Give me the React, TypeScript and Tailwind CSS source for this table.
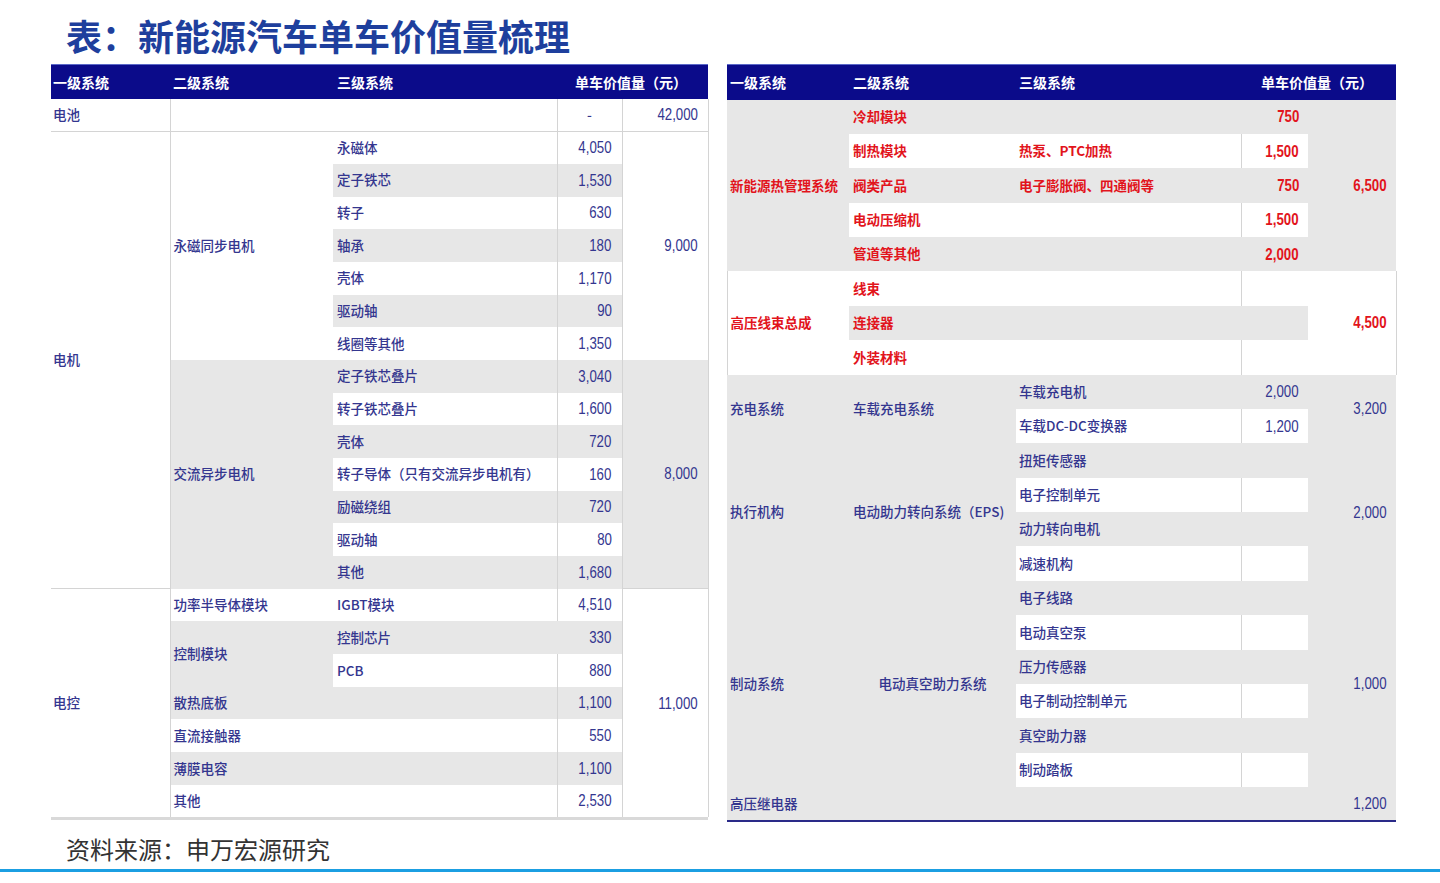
import React from "react";

const G = "bg-[#e7e7e7]";
const W = "bg-white";
const BLUE = "text-[#34368f]";
const RED = "text-[#e2141c] font-bold";
const LINE = "border-[#d4d4d4]";

function N({ v }: { v: string }) {
  return (
    <span className="inline-block origin-right scale-x-[0.78] font-['Liberation_Sans',sans-serif] text-[17px] leading-none">
      {v}
    </span>
  );
}

const motorPm: [string, string, string][] = [
  ["永磁体", "4,050", W],
  ["定子铁芯", "1,530", G],
  ["转子", "630", W],
  ["轴承", "180", G],
  ["壳体", "1,170", W],
  ["驱动轴", "90", G],
  ["线圈等其他", "1,350", W],
];

const motorAc: [string, string, string][] = [
  ["定子铁芯叠片", "3,040", G],
  ["转子铁芯叠片", "1,600", W],
  ["壳体", "720", G],
  ["转子导体（只有交流异步电机有）", "160", W],
  ["励磁绕组", "720", G],
  ["驱动轴", "80", W],
  ["其他", "1,680", G],
];

function LeftTable() {
  const r = "h-[32.68px]";
  return (
    <table className={`w-[657px] table-fixed border-collapse ${BLUE} text-[13.5px] font-medium leading-none`}>
      <colgroup>
        <col className="w-[119px]" />
        <col className="w-[163px]" />
        <col className="w-[224px]" />
        <col className="w-[65px]" />
        <col className="w-[86px]" />
      </colgroup>
      <thead>
        <tr className="h-[34px] bg-[#0b0b8a] text-white text-[14px] border-t border-[#5b68c8]">
          <th className="pl-[2px] text-left font-bold">一级系统</th>
          <th className="pl-[3px] text-left font-bold">二级系统</th>
          <th className="pl-[4px] text-left font-bold">三级系统</th>
          <th colSpan={2} className="pl-[18px] text-left font-bold">单车价值量（元）</th>
        </tr>
      </thead>
      <tbody>
        <tr className={`${r} border-b ${LINE}`}>
          <td className="pl-[2px] bg-white">电池</td>
          <td colSpan={2} className={`bg-white border-l ${LINE}`}></td>
          <td className={`bg-white border-l ${LINE} text-center`}>-</td>
          <td className={`bg-white border-l border-r ${LINE} text-right pr-[10px]`}>
            <N v="42,000" />
          </td>
        </tr>
        {motorPm.map(([name, v, bg], i) => (
          <tr key={"pm" + i} className={r}>
            {i === 0 && (
              <td rowSpan={14} className="pl-[2px] bg-white">
                电机
              </td>
            )}
            {i === 0 && (
              <td rowSpan={7} className={`pl-[3px] bg-white border-l ${LINE}`}>
                永磁同步电机
              </td>
            )}
            <td className={`pl-[4px] ${bg}`}>{name}</td>
            <td className={`${bg} border-l ${LINE} text-right pr-[10px]`}>
              <N v={v} />
            </td>
            {i === 0 && (
              <td rowSpan={7} className={`bg-white border-l border-r ${LINE} text-right pr-[10px]`}>
                <N v="9,000" />
              </td>
            )}
          </tr>
        ))}
        {motorAc.map(([name, v, bg], i) => (
          <tr key={"ac" + i} className={r}>
            {i === 0 && (
              <td rowSpan={7} className={`pl-[3px] ${G} border-l ${LINE}`}>
                交流异步电机
              </td>
            )}
            <td className={`pl-[4px] ${bg}`}>{name}</td>
            <td className={`${bg} border-l ${LINE} text-right pr-[10px]`}>
              <N v={v} />
            </td>
            {i === 0 && (
              <td rowSpan={7} className={`${G} border-l border-r ${LINE} text-right pr-[10px]`}>
                <N v="8,000" />
              </td>
            )}
          </tr>
        ))}
        <tr className={r}>
          <td rowSpan={7} className={`pl-[2px] bg-white border-t ${LINE}`}>
            电控
          </td>
          <td className={`pl-[3px] bg-white border-l ${LINE}`}>功率半导体模块</td>
          <td className="pl-[4px] bg-white">IGBT模块</td>
          <td className={`bg-white border-l ${LINE} text-right pr-[10px]`}>
            <N v="4,510" />
          </td>
          <td rowSpan={7} className={`bg-white border-l border-r border-t ${LINE} text-right pr-[10px]`}>
            <N v="11,000" />
          </td>
        </tr>
        <tr className={r}>
          <td rowSpan={2} className={`pl-[3px] ${G} border-l ${LINE}`}>
            控制模块
          </td>
          <td className={`pl-[4px] ${G}`}>控制芯片</td>
          <td className={`${G} text-right pr-[10px]`}>
            <N v="330" />
          </td>
        </tr>
        <tr className={r}>
          <td className="pl-[4px] bg-white">PCB</td>
          <td className={`bg-white border-l ${LINE} text-right pr-[10px]`}>
            <N v="880" />
          </td>
        </tr>
        {(
          [
            ["散热底板", "1,100", G],
            ["直流接触器", "550", W],
            ["薄膜电容", "1,100", G],
            ["其他", "2,530", W],
          ] as [string, string, string][]
        ).map(([name, v, bg], i) => (
          <tr key={"ec" + i} className={r}>
            <td colSpan={2} className={`pl-[3px] ${bg} border-l ${LINE}`}>
              {name}
            </td>
            <td className={`${bg} border-l ${LINE} text-right pr-[10px]`}>
              <N v={v} />
            </td>
          </tr>
        ))}
        <tr className="h-[3px]">
          <td colSpan={5} className="bg-[#d9d9d9]"></td>
        </tr>
      </tbody>
    </table>
  );
}

const thermal: [string, string, string, string][] = [
  ["冷却模块", "", "750", G],
  ["制热模块", "热泵、PTC加热", "1,500", W],
  ["阀类产品", "电子膨胀阀、四通阀等", "750", G],
  ["电动压缩机", "", "1,500", W],
  ["管道等其他", "", "2,000", G],
];

const eps: [string, string][] = [
  ["扭矩传感器", G],
  ["电子控制单元", W],
  ["动力转向电机", G],
  ["减速机构", W],
];

const brake: [string, string][] = [
  ["电子线路", G],
  ["电动真空泵", W],
  ["压力传感器", G],
  ["电子制动控制单元", W],
  ["真空助力器", G],
  ["制动踏板", W],
];

function RightTable() {
  const r = "h-[34.38px]";
  return (
    <table className={`w-[669px] table-fixed border-collapse ${BLUE} text-[13.5px] font-medium leading-none`}>
      <colgroup>
        <col className="w-[122px]" />
        <col className="w-[167px]" />
        <col className="w-[225px]" />
        <col className="w-[67px]" />
        <col className="w-[88px]" />
      </colgroup>
      <thead>
        <tr className="h-[35px] bg-[#0b0b8a] text-white text-[14px] border-t border-[#5b68c8]">
          <th className="pl-[3px] text-left font-bold">一级系统</th>
          <th className="pl-[4px] text-left font-bold">二级系统</th>
          <th className="pl-[3px] text-left font-bold">三级系统</th>
          <th colSpan={2} className="pl-[20px] text-left font-bold">单车价值量（元）</th>
        </tr>
      </thead>
      <tbody>
        {thermal.map(([a, b, v, bg], i) => (
          <tr key={"th" + i} className={`${r} ${RED}`}>
            {i === 0 && (
              <td rowSpan={5} className={`pl-[3px] ${G} whitespace-nowrap`}>
                新能源热管理系统
              </td>
            )}
            <td className={`pl-[4px] ${bg}`}>{a}</td>
            <td className={`pl-[3px] ${bg}`}>{b}</td>
            <td className={`${bg} ${bg === W ? "border-l " + LINE : ""} text-right pr-[9px]`}>
              <N v={v} />
            </td>
            {i === 0 && (
              <td rowSpan={5} className={`${G} text-right pr-[9px]`}>
                <N v="6,500" />
              </td>
            )}
          </tr>
        ))}
        {(
          [
            ["线束", W],
            ["连接器", G],
            ["外装材料", W],
          ] as [string, string][]
        ).map(([a, bg], i) => (
          <tr key={"hv" + i} className={`${r} ${RED}`}>
            {i === 0 && (
              <td rowSpan={3} className={`pl-[3px] bg-white border-l ${LINE}`}>
                高压线束总成
              </td>
            )}
            <td className={`pl-[4px] ${bg}`}>{a}</td>
            <td className={`${bg}`}></td>
            <td className={`${bg} ${bg === W ? "border-l " + LINE : ""}`}></td>
            {i === 0 && (
              <td rowSpan={3} className={`bg-white border-r ${LINE} text-right pr-[9px]`}>
                <N v="4,500" />
              </td>
            )}
          </tr>
        ))}
        <tr className={r}>
          <td rowSpan={2} className={`pl-[3px] ${G}`}>
            充电系统
          </td>
          <td rowSpan={2} className={`pl-[4px] ${G}`}>
            车载充电系统
          </td>
          <td className={`pl-[3px] ${G}`}>车载充电机</td>
          <td className={`${G} text-right pr-[9px]`}>
            <N v="2,000" />
          </td>
          <td rowSpan={2} className={`${G} text-right pr-[9px]`}>
            <N v="3,200" />
          </td>
        </tr>
        <tr className={r}>
          <td className="pl-[3px] bg-white">车载DC-DC变换器</td>
          <td className={`bg-white border-l ${LINE} text-right pr-[9px]`}>
            <N v="1,200" />
          </td>
        </tr>
        {eps.map(([a, bg], i) => (
          <tr key={"eps" + i} className={r}>
            {i === 0 && (
              <td rowSpan={4} className={`pl-[3px] ${G}`}>
                执行机构
              </td>
            )}
            {i === 0 && (
              <td rowSpan={4} className={`pl-[4px] ${G} whitespace-nowrap`}>
                电动助力转向系统（EPS)
              </td>
            )}
            <td className={`pl-[3px] ${bg}`}>{a}</td>
            <td className={`${bg} ${bg === W ? "border-l " + LINE : ""}`}></td>
            {i === 0 && (
              <td rowSpan={4} className={`${G} text-right pr-[9px]`}>
                <N v="2,000" />
              </td>
            )}
          </tr>
        ))}
        {brake.map(([a, bg], i) => (
          <tr key={"br" + i} className={r}>
            {i === 0 && (
              <td rowSpan={6} className={`pl-[3px] ${G}`}>
                制动系统
              </td>
            )}
            {i === 0 && (
              <td rowSpan={6} className={`${G} text-center`}>
                电动真空助力系统
              </td>
            )}
            <td className={`pl-[3px] ${bg}`}>{a}</td>
            <td className={`${bg} ${bg === W ? "border-l " + LINE : ""}`}></td>
            {i === 0 && (
              <td rowSpan={6} className={`${G} text-right pr-[9px]`}>
                <N v="1,000" />
              </td>
            )}
          </tr>
        ))}
        <tr className={`${r} border-b-2 border-[#2a2a88]`}>
          <td className={`pl-[3px] ${G}`}>高压继电器</td>
          <td className={G}></td>
          <td className={G}></td>
          <td className={G}></td>
          <td className={`${G} text-right pr-[9px]`}>
            <N v="1,200" />
          </td>
        </tr>
      </tbody>
    </table>
  );
}

export default function App() {
  return (
    <div className="w-[1440px] h-[883px] bg-white overflow-hidden font-['Noto_Sans_CJK_SC',sans-serif]">
      <div className="h-[64px] pl-[66px] pt-[17px]">
        <h1 className="text-[36px] leading-none font-bold text-[#1e3f9d]">
          表：新能源汽车单车价值量梳理
        </h1>
      </div>
      <div className="h-[759px] flex items-start pl-[51px] gap-[18px]">
        <LeftTable />
        <RightTable />
      </div>
      <div className="h-[46px] pl-[66px] pt-[14px]">
        <p className="text-[24px] leading-none text-[#333333]">资料来源：申万宏源研究</p>
      </div>
      <div className="h-[3px] bg-[#1b9fe2]" />
    </div>
  );
}
